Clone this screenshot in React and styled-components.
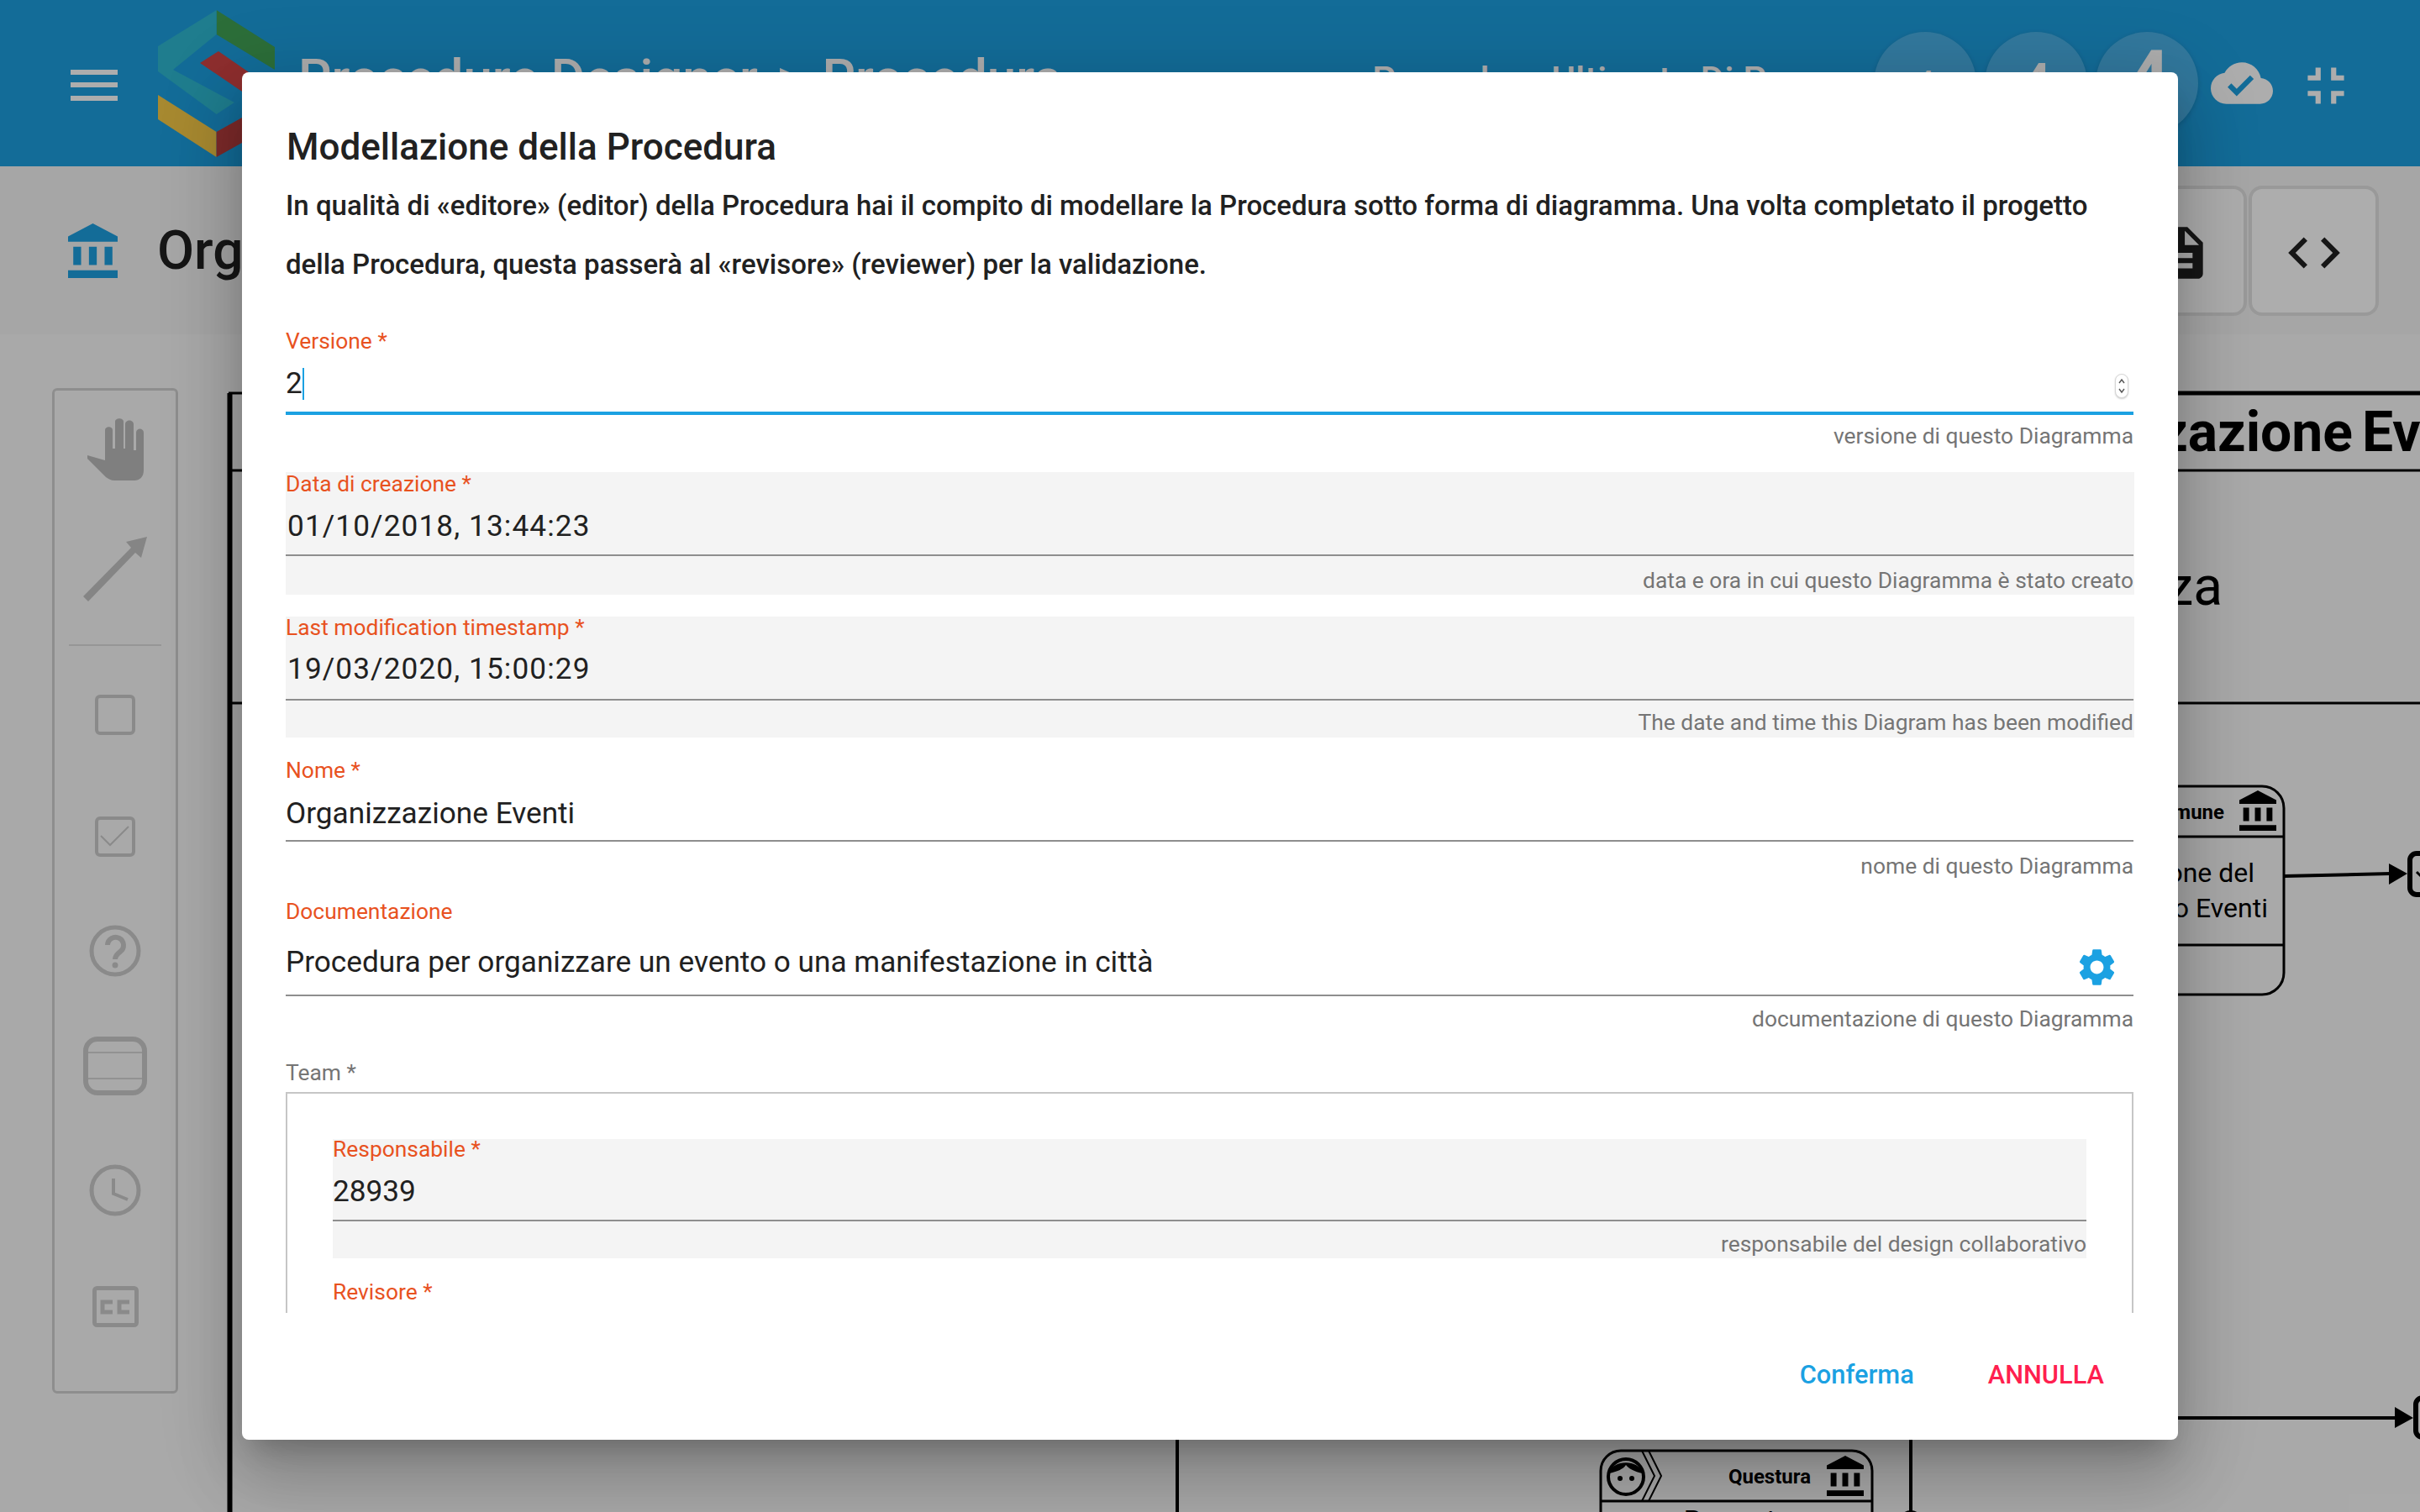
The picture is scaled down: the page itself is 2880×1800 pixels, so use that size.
import React from 'react';
import styled, { createGlobalStyle } from 'styled-components';

const Global = createGlobalStyle`
  html, body { margin: 0; padding: 0; background: #fafafa; }
  * { box-sizing: border-box; }
  body { font-family: Roboto, "Liberation Sans", sans-serif; }
`;

const Page = styled.div`
  position: relative; width: 2880px; height: 1800px; overflow: hidden;
  display: flex; flex-direction: column; background: #fafafa;
`;

/* ---------- top application bar ---------- */
const Header = styled.header`
  height: 198px; flex: none; display: flex; align-items: center;
  padding-left: 84px; background: #1d9fe1; color: #fff;
`;
const Burger = styled.div`
  width: 56px; display: flex; flex-direction: column; gap: 9.5px; margin-top: 4px;
  i { display: block; height: 6px; background: #fff; }
`;
const Logo = styled.svg`
  width: 140px; height: 175px; flex: none; margin: 0 0 0 47px;
`;
const AppTitle = styled.div`
  margin: 0 0 12px 28px; font-size: 62px; line-height: 70px; font-weight: 500; white-space: nowrap;
`;
const Crumb = styled.span`
  margin: 0 22px; font-weight: 400;
`;
const MidText = styled.div`
  position: absolute; left: 1633px; top: 70px;
  font-size: 44px; line-height: 52px; font-weight: 500; white-space: nowrap;
`;
const RightGroup = styled.div`
  margin-left: auto; display: flex; align-items: center; padding-right: 75px;
`;
const Avatars = styled.div`display: flex; gap: 10px; margin-right: 15px;`;
const Avatar = styled.div`
  width: 122px; height: 122px; border-radius: 50%; background: rgba(255,255,255,.2);
  display: flex; align-items: center; justify-content: center;
  font-size: ${p => p.$size}px; font-weight: 500; line-height: 1; color: #fff;
  box-shadow: 0 2px 6px rgba(0,0,0,.15);
`;
const HeadIcon = styled.svg`
  width: 74px; height: 74px; fill: #fff; flex: none;
  margin: ${p => p.$m || 0};
`;

/* ---------- second bar ---------- */
const SubBar = styled.div`
  height: 200px; flex: none; display: flex; align-items: center;
  background: #f5f5f5; padding: 0 49px 0 81px;
`;
const BankIcon = styled.svg`
  width: 59px; height: 65px; fill: #1d9fe1; flex: none;
`;
const DocTitle = styled.h1`
  margin: 0 0 0 47px; font-size: 64px; font-weight: 500; color: #212121; white-space: nowrap;
`;
const Actions = styled.div`margin-left: auto; display: flex; gap: 2px;`;
const ActionButton = styled.div`
  width: 155px; height: 155px; border: 4px solid #e2e2e2; border-radius: 16px;
  background: #ffffff; display: flex; align-items: center; justify-content: center;
  svg { width: 74px; height: 74px; fill: #212121; margin-top: 6px; }
`;

/* ---------- main: palette + canvas ---------- */
const Main = styled.main`flex: 1; min-height: 0; display: flex;`;
const Palette = styled.aside`
  flex: none; width: 150px; height: 1197px; margin: 64px 0 0 62px;
  border: 3px solid #d2d2d2; border-radius: 6px;
  display: flex; flex-direction: column; align-items: center;
`;
const Tool = styled.svg`
  flex: none; display: block; margin-top: ${p => p.$gap}px;
  width: ${p => p.$w}px; height: ${p => p.$h}px;
  fill: none; stroke: #cccccc;
`;
const PaletteRule = styled.hr`
  flex: none; width: 110px; height: 2px; margin: ${p => p.$gap}px 0 0; border: 0; background: #dedede;
`;
const Canvas = styled.svg`
  flex: 1; min-width: 0; display: block; height: 1402px;
  text { font-family: Roboto, "Liberation Sans", sans-serif; fill: #000; }
`;

/* ---------- dialog ---------- */
const Overlay = styled.div`
  position: absolute; inset: 0; background: rgba(0,0,0,.32);
  display: flex; align-items: center; justify-content: center;
`;
const Dialog = styled.section`
  width: 2304px; height: 1628px; background: #fff; border-radius: 8px;
  display: flex; flex-direction: column; overflow: hidden;
  box-shadow: 0 22px 30px -14px rgba(0,0,0,.2), 0 48px 76px 6px rgba(0,0,0,.14), 0 18px 92px 16px rgba(0,0,0,.12);
`;
const DialogTitle = styled.h2`
  flex: none; margin: 0; padding: 57px 52px 0 53px; font-size: 44px; line-height: 64px; font-weight: 500; color: #212121;
`;
const Body = styled.div`
  flex: 1; min-height: 0; overflow: hidden; padding: 0 52px;
  display: flex; flex-direction: column;
`;
const Intro = styled.p`
  flex: none; margin: 3px 0 0; font-size: 33px; line-height: 70px; font-weight: 500; color: #212121;
`;
const Field = styled.div`
  flex: none; position: relative; margin-top: ${p => p.$mt || 0}px;
  padding-right: ${p => (p.$flush ? 0 : 1)}px;
  background: ${p => (p.$disabled ? '#f4f4f4' : 'transparent')};
`;
const Label = styled.label`
  display: block; height: ${p => p.$h || 29}px; line-height: ${p => p.$h || 29}px;
  font-size: 26.4px; color: #e8521f; white-space: nowrap;
`;
const Control = styled.div`
  height: ${p => p.$h}px; padding: ${p => p.$pt}px 0 0 ${p => p.$pl || 0}px;
  border-bottom: ${p => (p.$focus ? '4px solid #1ba1e2' : '2px solid #8e8e8e')};
  font-size: 35.2px; line-height: 40px; color: #212121; white-space: nowrap;
  letter-spacing: ${p => p.$ls || 0}px;
`;
const Caret = styled.span`
  display: inline-block; width: 2px; height: 38px; background: #1ba1e2; vertical-align: -8px;
`;
const Hint = styled.div`
  height: ${p => p.$h}px; padding-top: ${p => p.$pt}px; text-align: right;
  font-size: 26.4px; line-height: 30px; color: #757575; white-space: nowrap;
`;
const Spinner = styled.span`
  position: absolute; right: 7px; top: 54px; width: 16px; height: 29px;
  border: 1px solid #d6d6d6; border-radius: 8px; background: #fff;
  box-shadow: 0 1px 2px rgba(0,0,0,.2);
  svg { display: block; width: 14px; height: 27px; fill: none; stroke: #555; stroke-width: 1.4; }
`;
const Gear = styled.svg`
  position: absolute; right: 18px; top: 54px; width: 53px; height: 53px; fill: #1ba1e2;
`;
const TeamLabel = styled.div`
  flex: none; margin: 32px 0 8px; font-size: 26.4px; line-height: 30px; color: #757575;
`;
const TeamBox = styled.fieldset`
  flex: none; margin: 0; width: 2199px; padding: 54px 54px 0; min-width: 0;
  border: 2px solid #c6c6c6;
`;
const Footer = styled.footer`
  flex: none; height: 151px; display: flex; align-items: center; justify-content: flex-end;
  gap: 88px; padding: 0 88px 3px 0;
`;
const TextButton = styled.button`
  border: 0; background: none; padding: 0; font: 500 30.8px/40px Roboto, sans-serif;
  color: ${p => p.$danger ? '#ff1f4f' : '#1ba1e2'};
`;

const P = {
  bank: 'M4 10v7h3v-7H4zm6 0v7h3v-7h-3zM2 22h19v-3H2v3zm14-12v7h3v-7h-3zm-4.5-9L2 6v2h19V6l-9.5-5z',
  cloud: 'M19.35 10.04C18.67 6.59 15.64 4 12 4 9.11 4 6.6 5.64 5.35 8.04 2.34 8.36 0 10.91 0 14c0 3.31 2.69 6 6 6h13c2.76 0 5-2.24 5-5 0-2.64-2.05-4.78-4.65-4.96zM10 17l-3.5-3.5 1.41-1.41L10 14.17 15.18 9l1.41 1.41L10 17z',
  exit: 'M5 16h3v3h2v-5H5v2zm3-8H5v2h5V5H8v3zm6 11h2v-3h3v-2h-5v5zm2-11V5h-2v5h5V8h-3z',
  doc: 'M14 2H6c-1.1 0-1.99.9-1.99 2L4 20c0 1.1.89 2 1.99 2H18c1.1 0 2-.9 2-2V8l-6-6zm2 16H8v-2h8v2zm0-4H8v-2h8v2zm-3-5V3.5L18.5 9H13z',
  code: 'M9.4 16.6L4.8 12l4.6-4.6L8 6l-6 6 6 6 1.4-1.4zm5.2 0l4.6-4.6-4.6-4.6L16 6l6 6-6 6-1.4-1.4z',
  gear: 'M19.14 12.94c.04-.3.06-.61.06-.94 0-.32-.02-.64-.07-.94l2.03-1.58c.18-.14.23-.41.12-.61l-1.92-3.32c-.12-.22-.37-.29-.59-.22l-2.39.96c-.5-.38-1.03-.7-1.62-.94l-.36-2.54c-.04-.24-.24-.41-.48-.41h-3.84c-.24 0-.43.17-.47.41l-.36 2.54c-.59.24-1.13.57-1.62.94l-2.39-.96c-.22-.08-.47 0-.59.22L2.74 8.87c-.12.21-.08.47.12.61l2.03 1.58c-.05.3-.09.63-.09.94s.02.64.07.94l-2.03 1.58c-.18.14-.23.41-.12.61l1.92 3.32c.12.22.37.29.59.22l2.39-.96c.5.38 1.03.7 1.62.94l.36 2.54c.05.24.24.41.48.41h3.84c.24 0 .44-.17.47-.41l.36-2.54c.59-.24 1.13-.56 1.62-.94l2.39.96c.22.08.47 0 .59-.22l1.92-3.32c.12-.22.07-.47-.12-.61l-2.01-1.58zM12 15.6c-1.98 0-3.6-1.62-3.6-3.6s1.62-3.6 3.6-3.6 3.6 1.62 3.6 3.6-1.62 3.6-3.6 3.6z',
};

const Diagram = () => (
  <Canvas viewBox="212 398 2668 1402" preserveAspectRatio="xMinYMin slice">
    <g stroke="#000" fill="none">
      <path d="M273.5 468V1800" strokeWidth="6" />
      <path d="M272 468H2880" strokeWidth="3" />
      <path d="M2592 468H2880" strokeWidth="5" />
      <path d="M272 560H2880" strokeWidth="3" />
      <path d="M272 837H2880" strokeWidth="3" />
      <path d="M1401 1700V1800" strokeWidth="4" />
      <path d="M2274 1700V1800" strokeWidth="4" />
      <rect x="2300" y="936" width="418" height="248" rx="26" strokeWidth="3" />
      <path d="M2300 996H2718M2300 1125H2718" strokeWidth="3" />
      <path d="M2718 1043L2845 1040" strokeWidth="4" />
      <rect x="2868" y="1016" width="40" height="49" rx="8" strokeWidth="6" />
      <path d="M2876 1038L2884 1046" strokeWidth="3" />
      <path d="M2592 1688H2852" strokeWidth="4" />
      <rect x="2875" y="1664" width="40" height="47" rx="8" strokeWidth="6" />
      <rect x="1905" y="1727" width="323" height="140" rx="24" strokeWidth="3" />
      <path d="M1905 1787H2228" strokeWidth="3" />
      <path d="M1962 1727L1977 1757L1962 1787M1954 1787L1969 1757L1954 1727" strokeWidth="2" />
      <circle cx="1935" cy="1758" r="21" strokeWidth="4" />
    </g>
    <path d="M2865 1040L2843 1028V1053Z M2872 1688L2850 1675V1700Z" fill="#000" />
    <circle cx="2274" cy="1812" r="14" fill="#000" />
    <path d="M1915 1754C1918 1738 1950 1736 1955 1754C1945 1752 1938 1748 1935 1744C1932 1749 1924 1752 1915 1754Z" fill="#000" />
    <circle cx="1928" cy="1760" r="3" fill="#000" />
    <circle cx="1942" cy="1760" r="3" fill="#000" />
    <svg x="2665" y="941" width="44" height="48" viewBox="2 1 19 21" preserveAspectRatio="none"><path d={P.bank} fill="#000" /></svg>
    <svg x="2174" y="1733" width="44" height="48" viewBox="2 1 19 21" preserveAspectRatio="none"><path d={P.bank} fill="#000" /></svg>
    <text x="2800" y="537" textAnchor="end" fontSize="66" fontWeight="700">Organizzazione</text>
    <text x="2811" y="537" fontSize="66" fontWeight="700">Eventi</text>
    <text x="2645" y="720" textAnchor="end" fontSize="64" fontWeight="400">Organizza</text>
    <text x="2647" y="975" textAnchor="end" fontSize="24" fontWeight="700">Comune</text>
    <text x="2683" y="1050" textAnchor="end" fontSize="32">Creazione del</text>
    <text x="2699" y="1092" textAnchor="end" fontSize="32">Processo Eventi</text>
    <text x="2155" y="1766" textAnchor="end" fontSize="24" fontWeight="700">Questura</text>
    <text x="2067" y="1820" textAnchor="middle" fontSize="32">Presenta</text>
  </Canvas>
);

export default function App() {
  return (
    <Page>
      <Global />
      <Header>
        <Burger><i /><i /><i /></Burger>
        <Logo viewBox="0 0 140 175">
          <path d="M70.6 0L140 44V71L70.6 29Z" fill="#41a254" />
          <path d="M70.6 0L1 43V73L70.6 124L92 110L19 71L70.6 29Z" fill="#2eb8d1" />
          <path d="M51 63L73 49L125 85L104 99Z" fill="#d14444" />
          <path d="M1 101L70.6 145V175L1 130Z" fill="#f7cb47" />
          <path d="M70.6 145L101 128V158L70.6 175Z" fill="#b83e3e" />
        </Logo>
        <AppTitle>Procedure Designer<Crumb>&gt;</Crumb>Procedura</AppTitle>
        <MidText>Procedura Ultimata Di Prova</MidText>
        <RightGroup>
          <Avatars>
            <Avatar $size={38}>4</Avatar>
            <Avatar $size={65}>4</Avatar>
            <Avatar $size={104}>4</Avatar>
          </Avatars>
          <HeadIcon viewBox="0 0 24 24"><path d={P.cloud} /></HeadIcon>
          <HeadIcon viewBox="0 0 24 24" $m="6px 0 0 26px"><path d={P.exit} /></HeadIcon>
        </RightGroup>
      </Header>

      <SubBar>
        <BankIcon viewBox="2 1 19 21" preserveAspectRatio="none"><path d={P.bank} /></BankIcon>
        <DocTitle>Organizzazione Eventi</DocTitle>
        <Actions>
          <ActionButton><svg viewBox="0 0 24 24"><path d={P.doc} /></svg></ActionButton>
          <ActionButton><svg viewBox="0 0 24 24"><path d={P.code} /></svg></ActionButton>
        </Actions>
      </SubBar>

      <Main>
        <Palette>
          <Tool $gap={33} $w={67} $h={74} viewBox="0 0 67 74">
            <path d="M0 44L21 50V14C21 9 30 9 30 14V36H33V4C33 -1 43 -1 43 4V36H45V7C45 1 55 1 55 7V38H58V17C58 11 67 11 67 17V62C67 70 62 74 56 74H32C28 74 25 72 22 70L0 48Z" fill="#bcbcbc" stroke="none" />
          </Tool>
          <Tool $gap={67} $w={76} $h={77} viewBox="0 0 76 77">
            <path d="M0 71L6 77L62 19L69 25L76 0L51 6L57 13Z" fill="#c5c5c5" stroke="none" />
          </Tool>
          <PaletteRule $gap={51} />
          <Tool $gap={58} $w={48} $h={48} viewBox="0 0 48 48" strokeWidth="4">
            <rect x="2" y="2" width="44" height="44" rx="4" />
          </Tool>
          <Tool $gap={97} $w={48} $h={48} viewBox="0 0 48 48" strokeWidth="4">
            <rect x="2" y="2" width="44" height="44" rx="4" />
            <path d="M7 23L18 34L40 12" strokeWidth="2" />
          </Tool>
          <Tool $gap={81} $w={62} $h={62} viewBox="0 0 62 62" strokeWidth="5">
            <circle cx="31" cy="31" r="28" />
            <path d="M22 24a9.500 9.500 0 1 1 15 8c-4 3-6 5-6 9" strokeWidth="6" />
            <circle cx="31" cy="48" r="3.500" fill="#cccccc" stroke="none" />
          </Tool>
          <Tool $gap={71} $w={76} $h={70} viewBox="0 0 76 70" strokeWidth="6">
            <rect x="3" y="3" width="70" height="64" rx="14" />
            <path d="M6 19H70M6 50H70" strokeWidth="1.500" />
          </Tool>
          <Tool $gap={82} $w={62} $h={62} viewBox="0 0 62 62" strokeWidth="5">
            <circle cx="31" cy="31" r="28" />
            <path d="M29 17V35L46 42" strokeWidth="4" />
          </Tool>
          <Tool $gap={83} $w={55} $h={49} viewBox="0 0 55 49" strokeWidth="5">
            <rect x="2.500" y="2.500" width="50" height="44" rx="3" />
            <path d="M24 19H12V31H24M44 19H32V31H44" />
          </Tool>
        </Palette>
        <Diagram />
      </Main>

      <Overlay>
        <Dialog>
          <DialogTitle>Modellazione della Procedura</DialogTitle>
          <Body>
            <Intro>
              In qualità di «editore» (editor) della Procedura hai il compito di modellare la Procedura sotto forma di diagramma. Una volta completato il progetto della Procedura, questa passerà al «revisore» (reviewer) per la validazione.
            </Intro>

            <Field $mt={41}>
              <Label $h={31}>Versione *</Label>
              <Control $h={72} $pt={14} $focus>2<Caret /></Control>
              <Spinner>
                <svg viewBox="0 0 14 27"><path d="M4 10L7 6L10 10M4 17L7 21L10 17" /></svg>
              </Spinner>
              <Hint $h={43} $pt={10}>versione di questo Diagramma</Hint>
            </Field>

            <Field $mt={25} $disabled>
              <Label>Data di creazione *</Label>
              <Control $h={71} $pt={15} $pl={2} $ls={1.1}>01/10/2018, 13:44:23</Control>
              <Hint $h={46} $pt={14}>data e ora in cui questo Diagramma è stato creato</Hint>
            </Field>

            <Field $mt={26} $disabled>
              <Label $h={26}>Last modification timestamp *</Label>
              <Control $h={74} $pt={16} $pl={2} $ls={1.1}>19/03/2020, 15:00:29</Control>
              <Hint $h={44} $pt={11}>The date and time this Diagram has been modified</Hint>
            </Field>

            <Field $mt={25}>
              <Label>Nome *</Label>
              <Control $h={70} $pt={16}>Organizzazione Eventi</Control>
              <Hint $h={44} $pt={14}>nome di questo Diagramma</Hint>
            </Field>

            <Field $mt={25}>
              <Label>Documentazione</Label>
              <Control $h={86} $pt={25}>Procedura per organizzare un evento o una manifestazione in città</Control>
              <Gear viewBox="0 0 24 24"><path d={P.gear} /></Gear>
              <Hint $h={44} $pt={12}>documentazione di questo Diagramma</Hint>
            </Field>

            <TeamLabel>Team *</TeamLabel>
            <TeamBox>
              <Field $disabled $flush>
                <Label $h={25}>Responsabile *</Label>
                <Control $h={73} $pt={17}>28939</Control>
                <Hint $h={44} $pt={12}>responsabile del design collaborativo</Hint>
              </Field>
              <Field $mt={26} $flush>
                <Label>Revisore *</Label>
                <Control $h={73} $pt={17} />
              </Field>
            </TeamBox>
          </Body>
          <Footer>
            <TextButton>Conferma</TextButton>
            <TextButton $danger>ANNULLA</TextButton>
          </Footer>
        </Dialog>
      </Overlay>
    </Page>
  );
}
